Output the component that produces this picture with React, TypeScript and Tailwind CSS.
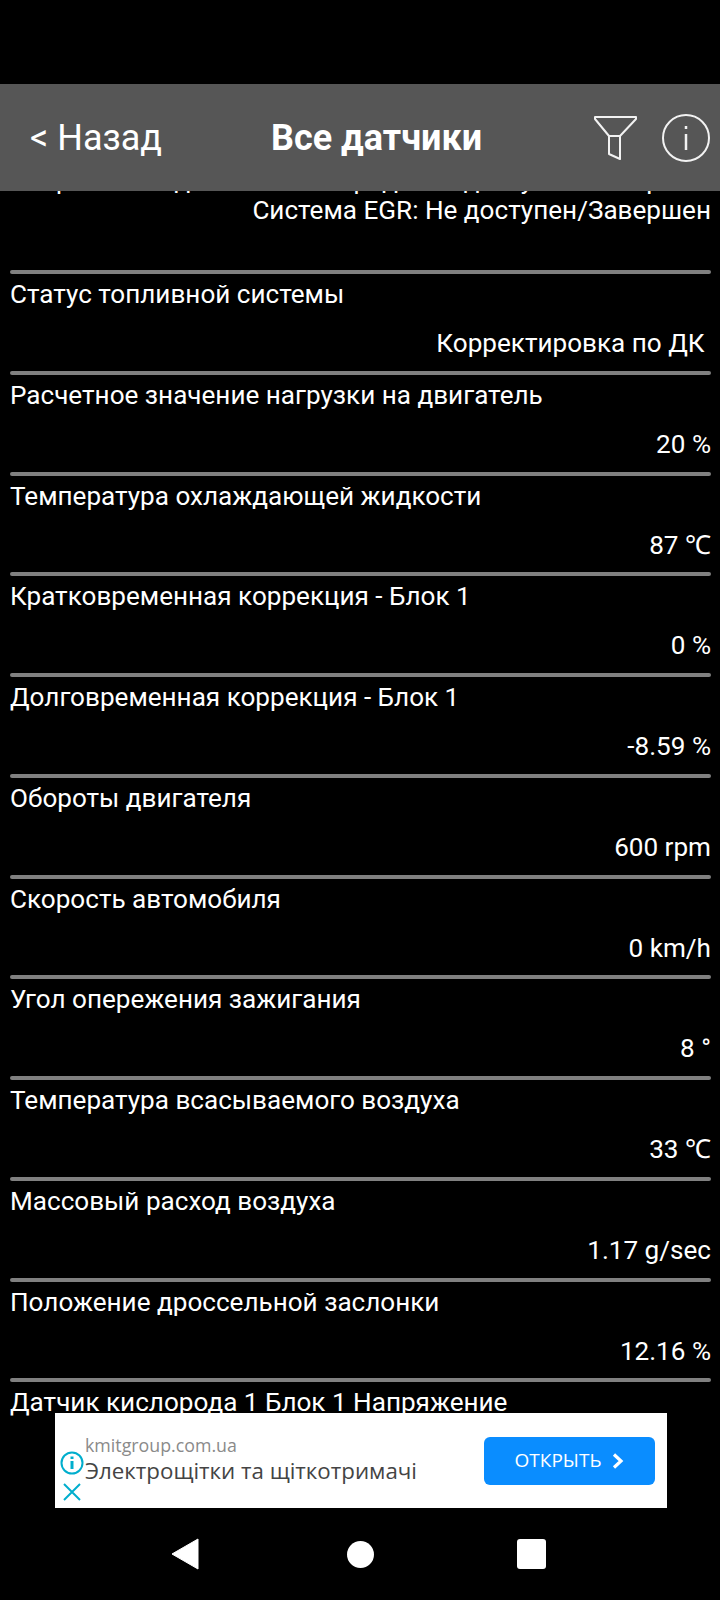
import React from "react";

const rows = [
  { label: "Статус топливной системы", value: "Корректировка по ДК " },
  { label: "Расчетное значение нагрузки на двигатель", value: "20 %" },
  { label: "Температура охлаждающей жидкости", value: "87 ℃" },
  { label: "Кратковременная коррекция - Блок 1", value: "0 %" },
  { label: "Долговременная коррекция - Блок 1", value: "-8.59 %" },
  { label: "Обороты двигателя", value: "600 rpm" },
  { label: "Скорость автомобиля", value: "0 km/h" },
  { label: "Угол опережения зажигания", value: "8 °" },
  { label: "Температура всасываемого воздуха", value: "33 ℃" },
  { label: "Массовый расход воздуха", value: "1.17 g/sec" },
  { label: "Положение дроссельной заслонки", value: "12.16 %" },
  { label: "Датчик кислорода 1 Блок 1 Напряжение", value: "" },
];

const Row = ({ label, value }: { label: string; value: string }) => (
  <div className="h-[100.75px] pl-[10px] pr-[9px]">
    <div className="h-[4px] rounded-full bg-[#808080]" />
    <p className="mt-[2px] h-[45px] text-[26.1px] leading-[36px] text-white whitespace-nowrap">{label}</p>
    <p className="h-[44px] text-right text-[26.1px] leading-[44px] text-white whitespace-pre">{value}</p>
  </div>
);

const App = () => (
  <div className="relative flex h-[1600px] w-[720px] flex-col overflow-hidden bg-black font-['Roboto',sans-serif]">
    <div className="h-[84px] shrink-0" />
    <header className="relative z-10 flex h-[107px] shrink-0 items-center bg-[#565656] text-white">
      <span className="ml-[30px] w-[241px] text-[36px]">&lt; Назад</span>
      <h1 className="w-[210px] whitespace-nowrap text-[36px] font-bold">Все датчики</h1>
      <svg className="ml-[113px] h-[44px] w-[43px]" viewBox="0 0 43 44" fill="none" stroke="#f2f2f2" strokeWidth="2" strokeLinejoin="round">
        <path d="M1 1 H42 V3 L26 20 H15 L1 3 Z" />
        <path d="M15 20 V38 L26 43 V20" />
      </svg>
      <svg className="ml-[25px] h-[48px] w-[48px]" viewBox="0 0 48 48" fill="none" stroke="#f2f2f2" strokeWidth="2">
        <circle cx="24" cy="24" r="23" />
        <path d="M24 20 V36" strokeWidth="2.5" />
        <path d="M24 12 V15" strokeWidth="2.5" />
      </svg>
    </header>
    <main className="min-h-0 flex-1 overflow-hidden">
      <div className="-mt-[26px] h-[105px] pl-[10px] pr-[9px] text-right text-[26.1px] leading-[30px] text-white">
        <p className="whitespace-nowrap">Нагреватель датчика кислорода: Не доступен/Завершен</p>
        <p className="whitespace-nowrap">Система EGR: Не доступен/Завершен</p>
      </div>
      {rows.map((row) => (
        <Row key={row.label} label={row.label} value={row.value} />
      ))}
    </main>
    <aside className="absolute left-[55px] top-[1413px] flex h-[95px] w-[612px] items-center bg-white">
      <div className="ml-[4px] flex w-[26px] flex-col items-center gap-[8px] pt-[30px]">
        <svg className="h-[24px] w-[24px]" viewBox="0 0 24 24" fill="none" stroke="#00aecd" strokeWidth="2">
          <circle cx="12" cy="12" r="10.5" />
          <path d="M12 10 V18" strokeWidth="3" />
          <path d="M12 5.5 V8" strokeWidth="3" />
        </svg>
        <svg className="h-[18px] w-[18px]" viewBox="0 0 18 18" fill="none" stroke="#00aecd" strokeWidth="2">
          <path d="M1 1 L17 17 M17 1 L1 17" />
        </svg>
      </div>
      <div className="flex-1 font-['Open_Sans',sans-serif]">
        <p className="-mt-[1px] text-[17.8px] leading-[22px] text-[#8a8a8a]">kmitgroup.com.ua</p>
        <p className="whitespace-nowrap text-[22.3px] font-medium leading-[30px] text-[#444444]">Электрощітки та щіткотримачі</p>
      </div>
      <button className="mr-[12px] flex h-[48px] w-[171px] items-center justify-center gap-[10px] rounded-[6px] bg-[#0a8dff] font-['Open_Sans',sans-serif] text-[19px] font-medium text-white">
        ОТКРЫТЬ
        <svg className="h-[16px] w-[13px]" viewBox="0 0 13 16" fill="none" stroke="white" strokeWidth="3.2">
          <path d="M3 1.5 L10 8 L3 14.5" />
        </svg>
      </button>
    </aside>
    <nav className="absolute bottom-0 left-0 flex h-[92px] w-full items-center">
      <svg className="ml-[171px] h-[32px] w-[28px]" viewBox="0 0 28 32" fill="white">
        <path d="M27 1 V31 L1 16 Z" stroke="white" strokeLinejoin="round" />
      </svg>
      <div className="ml-[148px] h-[27px] w-[27px] rounded-full bg-white" />
      <div className="ml-[143px] h-[30px] w-[29px] rounded-[3px] bg-white" />
    </nav>
  </div>
);

export default App;
